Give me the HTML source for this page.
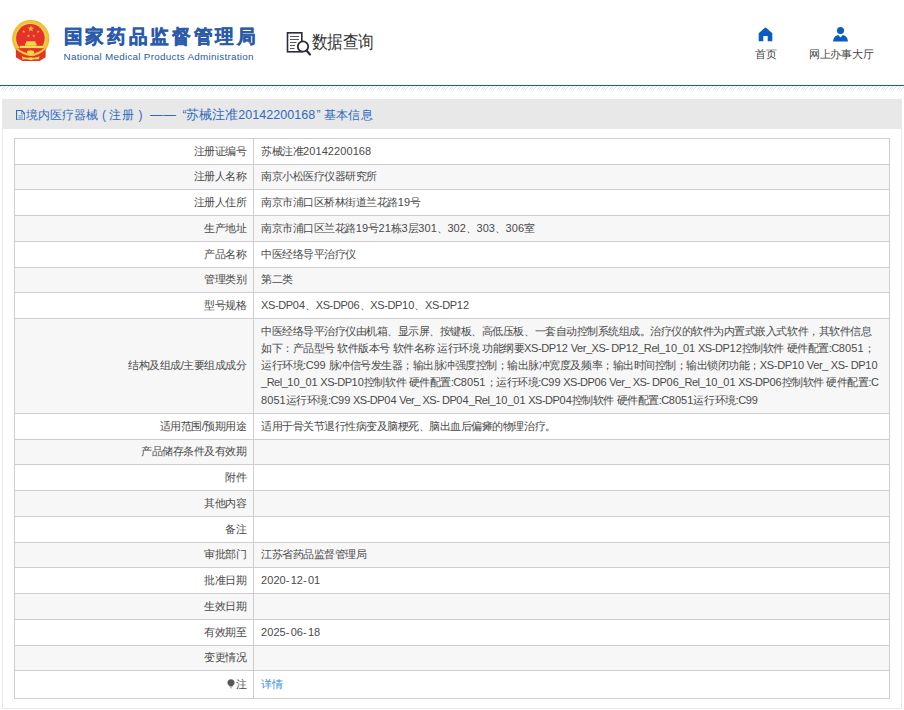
<!DOCTYPE html>
<html><head><meta charset="utf-8">
<style>
*{margin:0;padding:0;box-sizing:border-box}
html,body{width:904px;height:710px;overflow:hidden;background:#fff}
body{position:relative;font-family:"Liberation Sans",sans-serif;color:#555}
.abs{position:absolute;white-space:nowrap}
#emblem{left:11px;top:17px;width:40px;height:46px}
#t1{left:61.6px;top:21px;font-size:19.4px;font-weight:bold;color:#2a5aaa;line-height:30px;-webkit-text-stroke:0.38px #2a5aaa}
#t2{left:63.5px;top:50px;font-size:9.9px;letter-spacing:0.27px;color:#2a5aaa;line-height:14px}
#dq{left:286px;top:31px;width:26px;height:26px}
#dqt{left:311.5px;top:26.6px;font-size:15.5px;color:#333;line-height:26px;letter-spacing:-0.45px;transform:scaleY(1.15);transform-origin:0 0}
#home{left:758px;top:27px;width:15px;height:15px}
#user{left:832px;top:26px;width:17px;height:16px}
#hometxt{left:755px;top:47px;font-size:10.8px;color:#444;line-height:15px}
#usertxt{left:809px;top:47px;font-size:10.6px;letter-spacing:-0.3px;color:#444;line-height:15px}
#bline{left:0;top:85px;width:904px;height:1px;background:#0c5fbf}
#hatch{left:0;top:86px;width:904px;height:4px}
#panel{left:2px;top:99px;width:900px;height:610px;border:1px solid #e8e8e8;border-top:none}
#phead{left:2px;top:99px;width:900px;height:29.6px;background:#e8e8e8}
#ptitle{left:16px;top:100.7px;width:400px;height:29px;font-size:12px;color:#2d6bc1;line-height:29px}
table{position:absolute;left:14px;top:138px;width:876px;border-collapse:collapse;table-layout:fixed;font-size:11px;color:#4a4a4a}
.c{letter-spacing:-0.48px}.d{letter-spacing:0.075px}.l{letter-spacing:var(--ls,-0.4px)}
td{border:1px solid #cfcdd0;line-height:17.2px;vertical-align:middle;padding-top:0;padding-bottom:0}
td.l{width:239px;text-align:right;padding-right:6.5px}
td.v{padding-left:7px;white-space:nowrap}
tr:nth-child(even) td{background:#f7f7f7}
</style></head>
<body>
<svg id="emblem" class="abs" viewBox="11 17 40 46">
 <circle cx="30.8" cy="38.6" r="18.7" fill="#efbb35"/>
 <circle cx="30.8" cy="38.6" r="17.3" fill="#f3c53c"/>
 <circle cx="30.5" cy="38.4" r="15.2" fill="#f6dc4c"/>
 <circle cx="30.4" cy="38.3" r="14.3" fill="#e8302a"/>
 <polygon points="30.90,25.30 31.74,27.54 34.13,27.65 32.26,29.14 32.90,31.45 30.90,30.13 28.90,31.45 29.54,29.14 27.67,27.65 30.06,27.54" fill="#d9bd38"/>
 <polygon points="23.70,29.90 24.12,31.02 25.32,31.07 24.38,31.82 24.70,32.98 23.70,32.31 22.70,32.98 23.02,31.82 22.08,31.07 23.28,31.02" fill="#d9bd38"/>
 <polygon points="38.10,29.90 38.52,31.02 39.72,31.07 38.78,31.82 39.10,32.98 38.10,32.31 37.10,32.98 37.42,31.82 36.48,31.07 37.68,31.02" fill="#d9bd38"/>
 <polygon points="28.40,34.30 28.82,35.42 30.02,35.47 29.08,36.22 29.40,37.38 28.40,36.71 27.40,37.38 27.72,36.22 26.78,35.47 27.98,35.42" fill="#d9bd38"/>
 <polygon points="33.90,34.30 34.32,35.42 35.52,35.47 34.58,36.22 34.90,37.38 33.90,36.71 32.90,37.38 33.22,36.22 32.28,35.47 33.48,35.42" fill="#d9bd38"/>
 <path d="M26 41.3H35.5V43.2H36.5V45.8H25.1V43.2H26Z" fill="#f6d548"/>
 <rect x="19.9" y="45.8" width="22.3" height="2.6" fill="#f6dc50"/>
 <path d="M15.8 48.2 L45.6 48.2 L45.6 57.2 L39.5 61 L22.5 61 L16 57.6Z" fill="#e43226"/>
 <path d="M16.4 47.2 Q31 60 45.2 47.2 L45.4 49.4 Q31 62.5 16.2 49.6Z" fill="#f3cd3c"/>
 <ellipse cx="30.6" cy="52.2" rx="3.6" ry="1.9" fill="#f5d848"/>
 <path d="M21.8 56.2 Q26 58.5 30.8 57.2 Q35.5 58.5 39.6 56.2 L38.6 59.6 Q35 58.8 30.8 60.2 Q26.5 58.8 22.6 59.6Z" fill="#f4d84a"/>
</svg>
<div id="t1" class="abs"><span style="display:inline-block;width:21.7px;text-align:center;transform:scaleX(0.98)">国</span><span style="display:inline-block;width:21.7px;text-align:center;transform:scaleX(0.98)">家</span><span style="display:inline-block;width:21.7px;text-align:center;transform:scaleX(0.98)">药</span><span style="display:inline-block;width:21.7px;text-align:center;transform:scaleX(0.98)">品</span><span style="display:inline-block;width:21.7px;text-align:center;transform:scaleX(0.98)">监</span><span style="display:inline-block;width:21.7px;text-align:center;transform:scaleX(0.98)">督</span><span style="display:inline-block;width:21.7px;text-align:center;transform:scaleX(0.98)">管</span><span style="display:inline-block;width:21.7px;text-align:center;transform:scaleX(0.98)">理</span><span style="display:inline-block;width:21.7px;text-align:center;transform:scaleX(0.98)">局</span></div>
<div id="t2" class="abs">National Medical Products Administration</div>
<svg id="dq" class="abs" viewBox="0 0 26 26">
 <rect x="1.5" y="1.8" width="14.3" height="19" fill="none" stroke="#2b2b3b" stroke-width="1.6"/>
 <path d="M4 5.5h9M4 8.5h9M4 11.5h6.5M4 14.5h5M4 17.5h4.5" stroke="#444" stroke-width="0.9"/>
 <circle cx="17" cy="15.5" r="5.2" fill="#fff" stroke="#2b2b3b" stroke-width="1.8"/>
 <path d="M20.5 19.5 L24 23.5" stroke="#2b2b3b" stroke-width="2.2" stroke-linecap="round"/>
</svg>
<div id="dqt" class="abs">数据查询</div>
<svg id="home" class="abs" viewBox="0 0 15 15">
 <path d="M6.6 0.9 Q7.5 0.2 8.4 0.9 L14.3 6.2 L14.3 14.2 L9.7 14.2 L9.7 9 L5.3 9 L5.3 14.2 L0.7 14.2 L0.7 6.2Z" fill="#0a5cc4"/>
</svg>
<div id="hometxt" class="abs">首页</div>
<svg id="user" class="abs" viewBox="0 0 17 16">
 <circle cx="8.5" cy="4.6" r="3.55" fill="#0a5cc4"/>
 <path d="M1 15.6 Q1.5 9.8 6.2 8.9 L8.5 11.5 L10.8 8.9 Q15.5 9.8 16 15.6Z" fill="#0a5cc4"/>
</svg>
<div id="usertxt" class="abs">网上办事大厅</div>
<div id="bline" class="abs"></div>
<svg id="hatch" class="abs" width="904" height="4"><defs><pattern id="hp" x="1" width="4" height="4" patternUnits="userSpaceOnUse"><path d="M-1 5L5 -1" stroke="#dcdcdc" stroke-width="1"/></pattern></defs><rect width="904" height="4" fill="url(#hp)"/></svg>
<div id="panel" class="abs"></div>
<div id="phead" class="abs"></div>
<div id="ptitle" class="abs">
<svg style="position:absolute;left:0;top:9px" width="9.4" height="10.6" viewBox="0 0 9.4 10.6"><path d="M0.55 0.55H5.9L8.85 3.5V10.05H0.55Z" fill="none" stroke="#2d6bc1" stroke-width="1.1"/><path d="M5.6 0.7V3.8H8.7M2.4 5.9H7M2.4 8H7" fill="none" stroke="#2d6bc1" stroke-width="0.7"/></svg>
<span style="position:absolute;left:9.5px;letter-spacing:0.2px">境内医疗器械</span>
<span style="position:absolute;left:86px">(</span>
<span style="position:absolute;left:93px;letter-spacing:0.5px">注册</span>
<span style="position:absolute;left:122.5px">)</span>
<span style="position:absolute;left:134px;letter-spacing:0.6px;font-size:12.6px">——</span>
<span style="position:absolute;left:166.5px">“</span>
<span style="position:absolute;left:170px;font-size:12.5px;letter-spacing:0.05px">苏械注准20142200168</span>
<span style="position:absolute;left:300.5px">”</span>
<span style="position:absolute;left:308px;letter-spacing:0.2px">基本信息</span>
</div>
<table>
<tr style="height:25.7px"><td class="l"><span class="c">注册证编号</span></td><td class="v"><span class="c">苏械注准</span><span class="d">20142200168</span></td></tr>
<tr style="height:25.4px"><td class="l"><span class="c">注册人名称</span></td><td class="v"><span class="c">南京小松医疗仪器研究所</span></td></tr>
<tr style="height:25.6px"><td class="l"><span class="c">注册人住所</span></td><td class="v"><span class="c">南京市浦口区桥林街道兰花路</span><span class="d">19</span><span class="c">号</span></td></tr>
<tr style="height:26.1px"><td class="l"><span class="c">生产地址</span></td><td class="v"><span class="c">南京市浦口区兰花路</span><span class="d">19</span><span class="c">号</span><span class="d">21</span><span class="c">栋</span><span class="d">3</span><span class="c">层</span><span class="d">301</span><span class="c">、</span><span class="d">302</span><span class="c">、</span><span class="d">303</span><span class="c">、</span><span class="d">306</span><span class="c">室</span></td></tr>
<tr style="height:26.3px"><td class="l"><span class="c">产品名称</span></td><td class="v"><span class="c">中医经络导平治疗仪</span></td></tr>
<tr style="height:24.7px"><td class="l"><span class="c">管理类别</span></td><td class="v"><span class="c">第二类</span></td></tr>
<tr style="height:26.1px"><td class="l"><span class="c">型号规格</span></td><td class="v" style="--ls:-0.375px"><span class="l">XS-DP</span><span class="d">04</span><span class="c">、</span><span class="l">XS-DP</span><span class="d">06</span><span class="c">、</span><span class="l">XS-DP</span><span class="d">10</span><span class="c">、</span><span class="l">XS-DP</span><span class="d">12</span></td></tr>
<tr style="height:95.0px"><td class="l"><span class="c">结构及组成</span><span class="l">/</span><span class="c">主要组成成分</span></td><td class="v"><div class="ll"><div style="--ls:0px"><span class="c">中医经络导平治疗仪由机箱、显示屏、按键板、高低压板、一套自动控制系统组成。治疗仪的软件为内置式嵌入式软件，其软件信息</span></div><div style="--ls:-0.42px"><span class="c">如下：产品型号</span><span class="l"> </span><span class="c">软件版本号</span><span class="l"> </span><span class="c">软件名称</span><span class="l"> </span><span class="c">运行环境</span><span class="l"> </span><span class="c">功能纲要</span><span class="l">XS-DP</span><span class="d">12</span><span class="l"> Ver_XS- DP</span><span class="d">12</span><span class="l">_Rel_</span><span class="d">10</span><span class="l">_</span><span class="d">01</span><span class="l"> XS-DP</span><span class="d">12</span><span class="c">控制软件</span><span class="l"> </span><span class="c">硬件配置</span><span class="l">:C</span><span class="d">8051</span><span class="c">；</span></div><div style="--ls:-0.35px"><span class="c">运行环境</span><span class="l">:C</span><span class="d">99</span><span class="l"> </span><span class="c">脉冲信号发生器；输出脉冲强度控制；输出脉冲宽度及频率；输出时间控制；输出锁闭功能；</span><span class="l">XS-DP</span><span class="d">10</span><span class="l"> Ver_ XS- DP</span><span class="d">10</span></div><div style="--ls:-0.48px"><span class="l">_Rel_</span><span class="d">10</span><span class="l">_</span><span class="d">01</span><span class="l"> XS-DP</span><span class="d">10</span><span class="c">控制软件</span><span class="l"> </span><span class="c">硬件配置</span><span class="l">:C</span><span class="d">8051</span><span class="c">；运行环境</span><span class="l">:C</span><span class="d">99</span><span class="l"> XS-DP</span><span class="d">06</span><span class="l"> Ver_ XS- DP</span><span class="d">06</span><span class="l">_Rel_</span><span class="d">10</span><span class="l">_</span><span class="d">01</span><span class="l"> XS-DP</span><span class="d">06</span><span class="c">控制软件</span><span class="l"> </span><span class="c">硬件配置</span><span class="l">:C</span></div><div style="--ls:-0.47px"><span class="d">8051</span><span class="c">运行环境</span><span class="l">:C</span><span class="d">99</span><span class="l"> XS-DP</span><span class="d">04</span><span class="l"> Ver_ XS- DP</span><span class="d">04</span><span class="l">_Rel_</span><span class="d">10</span><span class="l">_</span><span class="d">01</span><span class="l"> XS-DP</span><span class="d">04</span><span class="c">控制软件</span><span class="l"> </span><span class="c">硬件配置</span><span class="l">:C</span><span class="d">8051</span><span class="c">运行环境</span><span class="l">:C</span><span class="d">99</span></div></div></td></tr>
<tr style="height:26.0px"><td class="l"><span class="c">适用范围</span><span class="l">/</span><span class="c">预期用途</span></td><td class="v"><span class="c">适用于骨关节退行性病变及脑梗死、脑出血后偏瘫的物理治疗。</span></td></tr>
<tr style="height:25.1px"><td class="l"><span class="c">产品储存条件及有效期</span></td><td class="v"></td></tr>
<tr style="height:25.9px"><td class="l"><span class="c">附件</span></td><td class="v"></td></tr>
<tr style="height:25.9px"><td class="l"><span class="c">其他内容</span></td><td class="v"></td></tr>
<tr style="height:26.0px"><td class="l"><span class="c">备注</span></td><td class="v"></td></tr>
<tr style="height:25.3px"><td class="l"><span class="c">审批部门</span></td><td class="v"><span class="c">江苏省药品监督管理局</span></td></tr>
<tr style="height:25.8px"><td class="l"><span class="c">批准日期</span></td><td class="v" style="--ls:1.2px"><span class="d">2020</span><span class="l">-</span><span class="d">12</span><span class="l">-</span><span class="d">01</span></td></tr>
<tr style="height:26.4px"><td class="l"><span class="c">生效日期</span></td><td class="v"></td></tr>
<tr style="height:25.8px"><td class="l"><span class="c">有效期至</span></td><td class="v" style="--ls:1.2px"><span class="d">2025</span><span class="l">-</span><span class="d">06</span><span class="l">-</span><span class="d">18</span></td></tr>
<tr style="height:24.7px"><td class="l"><span class="c">变更情况</span></td><td class="v"></td></tr>
<tr style="height:28.1px"><td class="l"><svg width="8" height="10" viewBox="0 0 8 10" style="vertical-align:-1px;margin-right:0.5px"><path d="M4 0.3C1.8 0.3 0.4 1.9 0.4 3.8C0.4 5.6 2.1 6.3 2.6 7.6H5.4C5.9 6.3 7.6 5.6 7.6 3.8C7.6 1.9 6.2 0.3 4 0.3Z" fill="#585858"/><path d="M2.8 8.1H5.2L4.7 9.6H3.3Z" fill="#bbb"/></svg><span class="c">注</span></td><td class="v"><span style="color:#3a8ee6"><span class="c">详情</span></span></td></tr>
</table>
</body></html>
